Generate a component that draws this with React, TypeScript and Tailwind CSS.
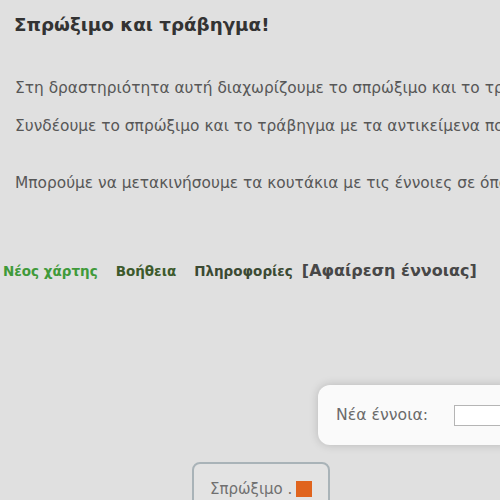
export default function App() {
  return (
    <div className="w-[500px] h-[500px] overflow-hidden bg-[#e0e0e0] whitespace-nowrap font-['DejaVu_Sans',sans-serif]">
      <h1 className="pl-[14px] pt-[14px] text-[18.3px] leading-[22px] font-bold text-[#333]">Σπρώξιμο και τράβηγμα!</h1>

      <div className="pl-[15px] pt-[42px] text-[15.4px] text-[#575757] leading-[20px]">
        <p>Στη δραστηριότητα αυτή διαχωρίζουμε το σπρώξιμο και το τράβηγμα.</p>
        <p className="mt-[18px]">Συνδέουμε το σπρώξιμο και το τράβηγμα με τα αντικείμενα που τα προκαλούν.</p>
        <p className="mt-[37px]">Μπορούμε να μετακινήσουμε τα κουτάκια με τις έννοιες σε όποια θέση θέλουμε.</p>
      </div>

      <nav className="flex items-baseline pl-[3px] mt-[66px] font-bold text-[13.5px]">
        <span className="text-[#3f9a3a]">Νέος χάρτης</span>
        <span className="ml-[18px] text-[#3d5a2c]">Βοήθεια</span>
        <span className="ml-[18px] text-[#3b4a33]">Πληροφορίες</span>
        <span className="ml-[9px] text-[16px] text-[#474747]">[Αφαίρεση έννοιας]</span>
      </nav>

      <div className="flex justify-end mt-[102px]">
        <div className="w-[190px] h-[60px] -mr-[8px] bg-[#fafafa] rounded-l-[12px] shadow-[0_0_10px_rgba(0,0,0,0.18)] flex items-center pl-[18px] gap-[26px]">
          <span className="text-[15.7px] text-[#6b6b6b]">Νέα έννοια:</span>
          <div className="w-[60px] h-[21px] border border-[#b5b5b5] bg-white shrink-0" />
        </div>
      </div>

      <div className="ml-[192px] mt-[17px] w-[138px] h-[50px] border-2 border-[#a9b3b8] rounded-[8px] bg-[#e3e3e3] flex items-start pt-[16px] pl-[16px] gap-[4px]">
        <span className="text-[15px] text-[#707070] leading-[18px]">Σπρώξιμο .</span>
        <span className="w-[16px] h-[16px] bg-[#e0641e] mt-[1px] shrink-0" />
      </div>
    </div>
  );
}
